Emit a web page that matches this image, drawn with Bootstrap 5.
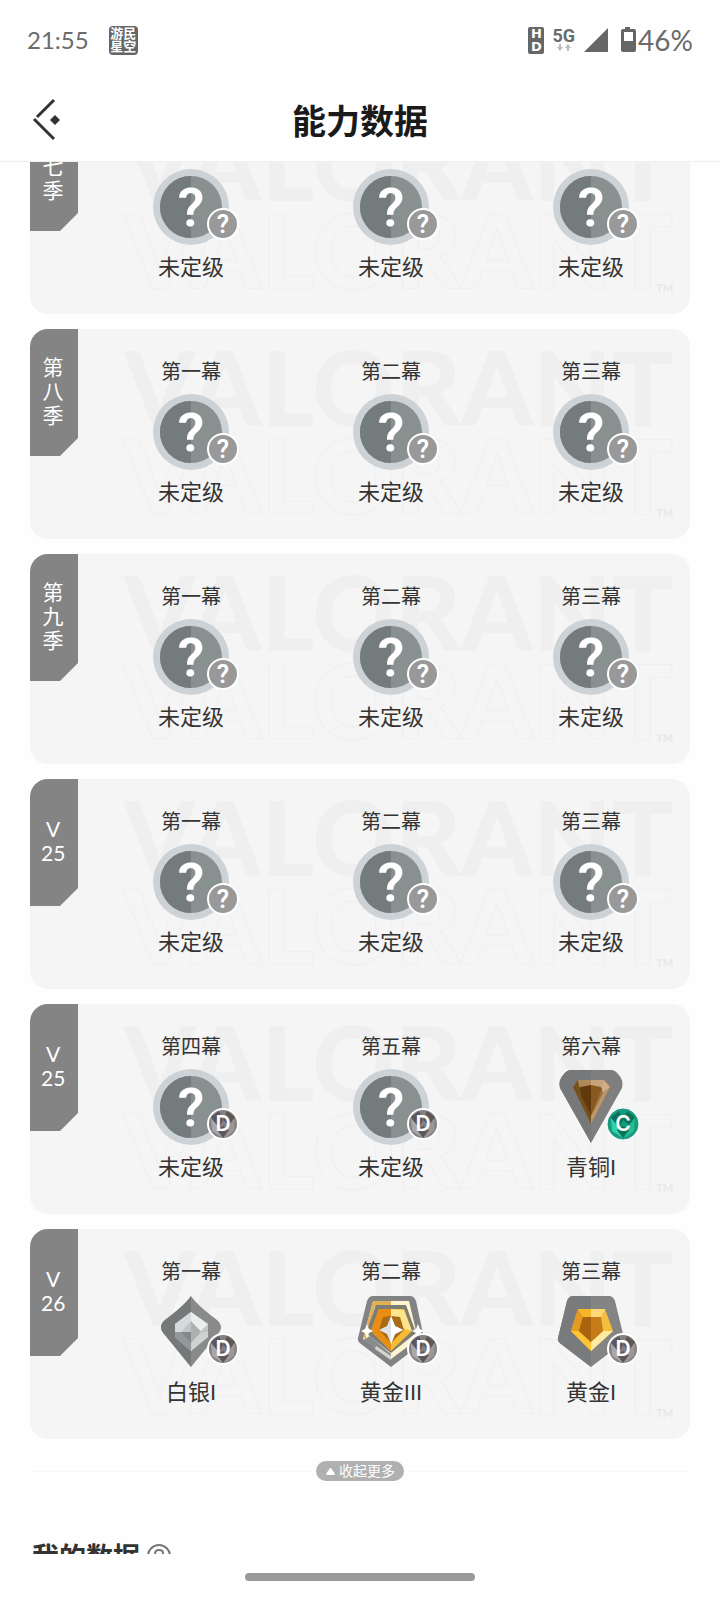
<!DOCTYPE html>
<html lang="zh-CN">
<head>
<meta charset="utf-8"/>
<meta content="width=device-width, initial-scale=1.0" name="viewport"/>
<title>能力数据</title>
<link href="https://cdn.jsdelivr.net/npm/bootstrap@5.3.0/dist/css/bootstrap.min.css" rel="stylesheet"/>
<style>
    body {
      height: 100vh;
      background: #fefefe;
      color: #333;
      font-family: Lato, "Noto Sans CJK SC", sans-serif;
    }
    svg {
      display: block;
      overflow: visible;
    }
    .status-bar {
      height: 80px;
      padding: 0 27px;
      color: #6b6b6b;
    }
    .clock {
      font-size: 24px;
      line-height: 32px;
    }
    .battery-text {
      font-size: 28px;
      line-height: 32px;
    }
    .seal {
      width: 29px;
      height: 29px;
      margin-left: 20px;
      border-radius: 4px;
      background: #666;
      color: #fff;
      font-size: 13px;
      line-height: 13px;
      font-weight: 700;
    }
    .hd-icon {
      width: 16px;
      height: 27px;
      border-radius: 2px;
      background: #666;
      color: #fff;
      font: 700 13px/13px "DejaVu Sans", sans-serif;
    }
    .net-type {
      font: 700 18px/16px Roboto, sans-serif;
    }
    .title-bar {
      height: 82px;
      padding: 0 32px;
      border-bottom: 1px solid #f0f0f0;
    }
    .title-bar h1 {
      font-size: 34px;
      line-height: 40px;
      color: #1a1a1a;
    }
    .side {
      width: 40px;
    }
    .scroll-area {
      min-height: 0;
      overflow-y: auto;
      scrollbar-width: none;
    }
    .scroll-area::-webkit-scrollbar {
      display: none;
    }
    .seasons {
      gap: 15px;
      padding: 0 30px;
    }
    .season {
      height: 210px;
      border-radius: 18px;
      background: #f5f5f5;
      overflow: hidden;
    }
    .season-tag {
      width: 48px;
      height: 127px;
      padding: 0 2px 4px 0;
      background: #848484;
      color: #fff;
      font-size: 21px;
      line-height: 24px;
      clip-path: polygon(0 0, 100% 0, 100% 109px, 30px 100%, 0 100%);
    }
    .season-tag span {
      max-width: 24px;
      text-align: center;
    }
    .acts {
      margin-right: -1px;
      padding: 30px 0 0 13px;
      z-index: 1;
    }
    .act-name {
      font-size: 20px;
      line-height: 24px;
    }
    .act-icon {
      width: 76px;
      height: 76px;
      margin: 11px 0;
    }
    .rank-name {
      font-family: "Liberation Sans", "Noto Sans CJK SC", sans-serif;
      font-size: 22px;
      line-height: 24px;
    }
    .grade {
      left: 54px;
      top: 39px;
    }
    .watermark {
      left: 94px;
      top: 14px;
      font: 900 102px/88px Lato, sans-serif;
      color: #efefef;
      user-select: none;
    }
    .watermark .hollow {
      color: #f5f5f5;
      -webkit-text-stroke: 1px #efefef;
    }
    .watermark .tm {
      right: 0;
      bottom: 0;
      font-size: 11px;
      line-height: 12px;
      color: #e9e9e9;
    }
    .more-row {
      margin-top: 22px;
      padding: 0 32px;
    }
    .more-row hr {
      margin: 0;
      border-color: #e4e4e4;
    }
    .more-btn {
      height: 20px;
      padding: 0 9px 0 10px;
      border: 0;
      border-radius: 10px;
      background: #b0b0b0;
      color: #fff;
      font-size: 14px;
      line-height: 20px;
    }
    .my-data {
      margin-top: 60px;
      padding: 0 32px;
      height: 260px;
    }
    .my-data h2 {
      font-size: 27px;
      line-height: 32px;
    }
    .home-area {
      height: 46px;
      padding-top: 19px;
    }
    .home-bar {
      width: 32%;
      height: 8px;
      border-radius: 4px;
      background: #999;
    }
  </style>
</head>
<body class="d-flex flex-column overflow-hidden">
<div class="status-bar d-flex align-items-center flex-shrink-0">
<span class="clock">21:55</span>
<span class="seal d-flex flex-column align-items-center justify-content-center"><span>游民</span><span>星空</span></span>
<div class="d-flex align-items-center ms-auto">
<span class="hd-icon d-flex flex-column align-items-center"><span>H</span><span>D</span></span>
<span class="d-flex flex-column align-items-center mx-1 px-1">
<span class="net-type">5G</span>
<svg width="14" height="8" viewBox="0 0 14 8" fill="#bbb"><path d="M2 0h2v3h2L3 7 0 3h2zM10 7h2V4h2l-3-4-3 4h2z"/></svg>
</span>
<svg width="26" height="26" viewBox="0 0 26 26" fill="#666"><path d="M25 1v24H1z"/></svg>
<svg class="ms-2" width="21" height="26" viewBox="0 0 21 26"><path d="M8 0h5v2h4q2 0 2 2v19q0 2-2 2H6q-2 0-2-2V4q0-2 2-2h2z" fill="#666"/><path d="M7 5h9v9H7z" fill="#fff"/></svg>
<span class="battery-text">46%</span>
</div>
</div>
<header class="title-bar d-flex align-items-center justify-content-between flex-shrink-0">
<button class="side btn p-0 border-0" type="button" aria-label="返回">
<svg width="30" height="46" viewBox="0 0 30 46"><path d="M22 2 5 19M2 21l20 20" fill="none" stroke="#333" stroke-width="3"/><path d="m23 17 5 5-5 5-5-5z" fill="#333"/></svg>
</button>
<h1 class="fw-bold m-0">能力数据</h1>
<span class="side"></span>
</header>
<main class="scroll-area flex-fill" id="scroll-area">
<div class="seasons d-flex flex-column" id="seasons"></div>
<div class="more-row d-flex align-items-center">
<hr class="flex-fill"/>
<button class="more-btn d-flex align-items-center gap-1 mx-1" type="button">
<svg width="9" height="7" viewBox="0 0 9 7" fill="#fff"><path d="M4 0h1l4 6-1 1H1L0 6z"/></svg>收起更多
</button>
<hr class="flex-fill"/>
</div>
<section class="my-data">
<div class="d-flex align-items-center">
<h2 class="fw-bold m-0">我的数据</h2>
<svg class="ms-2" width="24" height="24" viewBox="0 0 24 24" fill="none" stroke="#777" stroke-width="2"><circle cx="11" cy="11" r="11"/><path d="M7 9q0-4 4-4t4 3q0 2-4 5v2"/></svg>
</div>
</section>
</main>
<footer class="home-area flex-shrink-0">
<div class="home-bar mx-auto"></div>
</footer>
<script src="https://cdn.jsdelivr.net/npm/bootstrap@5.3.0/dist/js/bootstrap.bundle.min.js"></script>
<script>
const rankIcons = {
  '未定级': `
    <circle cx="38" cy="38" r="38" fill="#ccd2d6"/>
    <circle cx="38" cy="38" r="31" fill="#899190"/>
    <path d="M38 7a31 31 0 0 0 0 62z" fill="#737b7d"/>
    <text x="38" y="57" text-anchor="middle" font-family="Roboto, sans-serif" font-weight="600" font-size="54" fill="#fff">?</text>`,
  '青铜I': `
    <path d="M18 1h40q4 0 7 4 6 6 4 14L38 74 7 19Q5 11 11 5q3-4 7-4z" fill="#7f7f80"/>
    <path d="M38 1v73L7 19Q5 11 11 5q3-4 7-4z" fill="#777879"/>
    <path d="m25 11h26l6 7-19 37-18-37z" fill="#9a7347"/>
    <path d="m25 11h13v44L20 18z" fill="#76501c"/>
    <path d="m25 11h13v5l-12 2z" fill="#ae8a5b"/><path d="M38 11h13l-1 7-12-2z" fill="#c6a37c"/>
    <path d="m51 11 6 7-7 6-2-6z" fill="#cfad86"/>
    <path d="m27 19 11-3v31L28 26z" fill="#62390a"/>
    <path d="m38 16 11 3-3 8-8 20z" fill="#875a22"/>
    <path d="m50 24 7-6-19 37v-8z" fill="#ba9668"/>`,
  '白银I': `
    <path d="M38 2q6 9 26 24 8 7 0 15L38 73 12 41q-8-8 0-15Q32 11 38 2z" fill="#888a8b"/>
    <path d="M38 2v71L12 41q-8-8 0-15Q32 11 38 2z" fill="#76797a"/>
    <path d="m38 18 17 12v13L38 57 22 43V30z" fill="#c3c5c5"/>
    <path d="M38 18v20l-16 3V30z" fill="#d5dbda"/><path d="m38 18 17 12-7 7-10-9z" fill="#eceded"/>
    <path d="M38 38v19L22 43v-5z" fill="#939999"/><path d="m38 57 17-14v-5H38z" fill="#d0d1d1"/>
    <path d="m38 27 10 11-10 11z" fill="#aeb1b1"/><path d="M38 27v11H28z" fill="#bfc7c6"/><path d="M28 38h10v11z" fill="#838989"/>`,
  '黄金III': `
    <path d="M20 2h37q4 0 6 5l8 37q0 3-3 6L38 73 8 50q-4-3-3-6L14 7q2-5 6-5z" fill="#828385"/>
    <path d="M20 7h36l9 38-27 20-28-20z" fill="#fff4cf"/>
    <path d="M20 7h18v6H22L13 44h-3z" fill="#e3b155"/>
    <path d="m10 46 28 19v-5L17 42z" fill="#8a8b8c"/>
    <path d="M23 11h30l10 28-25 20-25-20z" fill="#7d7c75"/>
    <path d="M26 15h25l8 22-21 20-20-20z" fill="#f5bd32"/>
    <path d="M26 15h12v42L18 37z" fill="#e98e12"/>
    <path d="m38 15 13 1 8 21-10-3-3-10-8-1z" fill="#ffe48e"/>
    <path d="m30 23 8-1 9 1 4 13-13 13-12-13z" fill="#aa6b19"/>
    <path d="m38 22 4 10 8 4-8 4-4 10-4-10-8-4 8-4z" fill="#dfe3e5"/><path d="m38 22 4 10 8 4-8 4-4 10z" fill="#fff"/>
    <path d="m23 52 15 10v4L22 55z" fill="#d5d5d0"/>
    <path d="m14 30 2 5 4 2-4 2-2 5-2-5-4-2 4-2zM65 30l2 5 4 2-4 2-2 5-2-5-4-2 4-2z" fill="#fff"/>`,
  '黄金I': `
    <path d="M20 2h36q4 0 6 5l9 37q0 3-3 6L38 73 8 50q-4-3-3-6L14 7q2-5 6-5z" fill="#848485"/>
    <path d="M38 2v71L8 50q-4-3-3-6L14 7q2-5 6-5z" fill="#797a7b"/>
    <path d="M25 15h27l8 22-22 20-20-20z" fill="#f5bd3d"/>
    <path d="M25 15h13v42L18 37z" fill="#e59a20"/>
    <path d="m25 15 5 8h8v-8z" fill="#f4b72b"/><path d="M38 15h14l-4 8H38z" fill="#ffd975"/>
    <path d="m60 37-22 20v-9l12-11z" fill="#ffeaa1"/><path d="m18 37 20 20v-9L26 37z" fill="#ffc435"/>
    <path d="M30 23h18l2 14-12 11-12-11z" fill="#c47b18"/>
    <path d="M30 23h8v25L26 37z" fill="#a9640f"/>`
};

const facets = {
  '?': ['#999', '#a8a6a6', '#8f8f8f'],
  'D': ['#858183', '#5c5759', '#aaa5a7'],
  'C': ['#159c7c', '#0a7259', '#32d1a4']
};

const seasons = [
  { tag: '第七季', acts: [['第一幕', '未定级', '?'], ['第二幕', '未定级', '?'], ['第三幕', '未定级', '?']] },
  { tag: '第八季', acts: [['第一幕', '未定级', '?'], ['第二幕', '未定级', '?'], ['第三幕', '未定级', '?']] },
  { tag: '第九季', acts: [['第一幕', '未定级', '?'], ['第二幕', '未定级', '?'], ['第三幕', '未定级', '?']] },
  { tag: 'V 25', acts: [['第一幕', '未定级', '?'], ['第二幕', '未定级', '?'], ['第三幕', '未定级', '?']] },
  { tag: 'V 25', acts: [['第四幕', '未定级', 'D'], ['第五幕', '未定级', 'D'], ['第六幕', '青铜I', 'C']] },
  { tag: 'V 26', acts: [['第一幕', '白银I', 'D'], ['第二幕', '黄金III', 'D'], ['第三幕', '黄金I', 'D']] }
];

function gradeIcon(letter) {
  const [base, dark, light] = facets[letter];
  const cut = letter === '?' ? '' : `
    <path d="m4 9 8-6 4 9-6 12z" fill="${dark}"/><path d="m20 3 8 6-6 8-6-5z" fill="${dark}"/>
    <path d="m4 10 12 14v6L5 23z" fill="${light}"/><path d="m28 10-12 14 2 6 9-7z" fill="${light}" opacity=".6"/>
    <path d="m10 22 6 8 6-8-6-4z" fill="${dark}"/>`;
  const font = letter === '?' ? 'Roboto' : 'Inter';
  return `
    <svg class="grade position-absolute" width="32" height="32" viewBox="0 0 32 32">
      <circle cx="16" cy="16" r="15" fill="${base}"/>${cut}
      <circle cx="16" cy="16" r="15" fill="none" stroke="${letter === 'C' ? base : '#fff'}" stroke-width="${letter === 'C' ? 1 : 2}"/>
      <text x="16" y="${letter === '?' ? 25 : 23}" text-anchor="middle" font-family="${font}, sans-serif" font-weight="600" font-size="${letter === '?' ? 25 : 21}" fill="#fff">${letter}</text>
    </svg>`;
}

function renderSeasons() {
  document.getElementById('seasons').innerHTML = seasons.map(season => `
    <article class="season d-flex position-relative">
      <div class="watermark position-absolute" aria-hidden="true">
        <div>VALORANT</div>
        <div class="hollow">VALORANT</div>
        <span class="tm position-absolute">TM</span>
      </div>
      <div class="season-tag d-flex align-items-center justify-content-center flex-shrink-0"><span>${season.tag}</span></div>
      <div class="acts row g-0 flex-fill position-relative">
        ${season.acts.map(([act, rank, grade]) => `
        <div class="col-4 d-flex flex-column align-items-center">
          <div class="act-name">${act}</div>
          <div class="act-icon position-relative">
            <svg width="76" height="76" viewBox="0 0 76 76">${rankIcons[rank]}</svg>
            ${gradeIcon(grade)}
          </div>
          <div class="rank-name">${rank}</div>
        </div>`).join('')}
      </div>
    </article>`).join('');
}

renderSeasons();
// open the list a little way down, under the title bar
document.getElementById('scroll-area').scrollTop = 58;
</script>
</body>
</html>
